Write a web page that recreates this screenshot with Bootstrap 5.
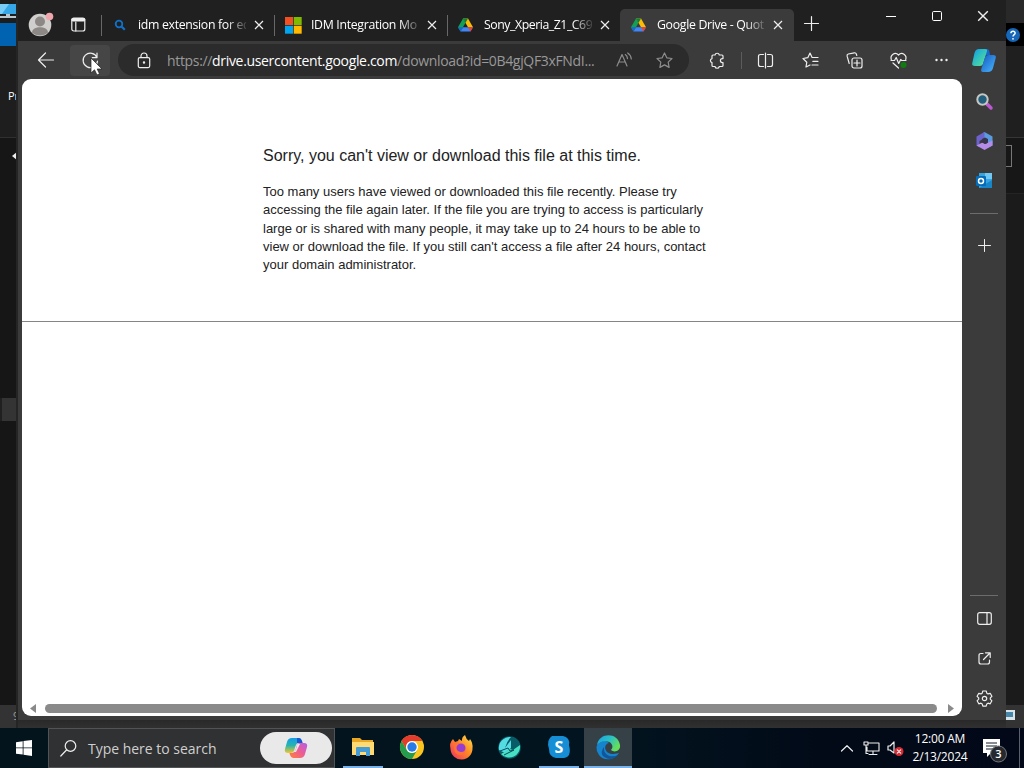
<!DOCTYPE html>
<html lang="en">
<head>
    <meta charset="UTF-8">
    <meta name="viewport" content="width=device-width, initial-scale=1.0">
    <title>Google Drive - Quota exceeded</title>
    <link href="https://cdn.jsdelivr.net/npm/bootstrap@5.3.2/dist/css/bootstrap.min.css" rel="stylesheet">
    <script src="https://cdn.jsdelivr.net/npm/bootstrap@5.3.2/dist/js/bootstrap.bundle.min.js"></script>
    <style>
        body { width: 1024px; height: 768px; background: #181818; font-family: "Open Sans", "Noto Sans", sans-serif; font-size: 12px; line-height: 1.5; color: #fff; }
        svg { display: block; flex: none; overflow: visible; }
        .line-icon { fill: none; stroke: #eee; stroke-width: 1.2; stroke-linecap: round; stroke-linejoin: round; }

        /* window behind the browser */
        .back-left { width: 18px; background: #161616; border-right: 2px solid #252525; }
        .back-left .title-area { height: 23px; background: #1d1d1d; }
        .back-left .file-tab { height: 23px; background: #0063b1; }
        .back-left .ribbon { height: 92px; background: #1e1e1e; border-bottom: 1px solid #303030; padding: 42px 0 0 8px; font-size: 11px; }
        .back-left .nav-area { height: 260px; padding: 11px 0 0 12px; }
        .back-left .picked { height: 23px; background: #343434; border-left: 2px solid #202020; }
        .back-left .back-status { padding: 3px 0 0 13px; font-size: 11px; color: #999; }
        .back-right { width: 18px; background: #1b1b1b; }
        .back-right .title-area { height: 23px; background: #292929; }
        .back-right .help-area { height: 23px; background: #000; }
        .back-right .ribbon { height: 92px; background: #1f1f1f; border-bottom: 1px solid #363636; }
        .back-right .address-area { height: 56px; background: #171717; border-bottom: 1px solid #242424; padding-top: 7px; }
        .back-right .address-end { width: 6px; height: 22px; border: 1px solid #777; border-left: 0; }
        .back-status { height: 23px; background: #333; }

        /* browser window */
        .desk { height: 728px; }
        .browser { width: 988px; height: 720px; background: #3b3b3b; }
        .browser-shadow { background: linear-gradient(#292929, #303030); }
        .tab-strip { height: 41px; background: #202020; }
        .profile { width: 44px; padding: 11px 0 0 10px; }
        .workspaces { width: 39px; padding: 17px 0 0 9px; }
        .page-tab { width: 173px; height: 32px; margin-top: 9px; padding-left: 10px; border-left: 1px solid transparent; }
        .page-tab.divided { border-image: linear-gradient(transparent 20%, #686868 20%, #686868 82%, transparent 82%) 1; }
        .page-tab.current { width: 174px; background: #3b3b3b; border-radius: 5px 5px 0 0; }
        .page-tab .favicon { width: 16px; margin-right: 10px; }
        .page-tab .caption { width: 108px; font-size: 12.3px; letter-spacing: -.32px; -webkit-mask-image: linear-gradient(90deg, #000 82%, rgba(0,0,0,.15) 100%); mask-image: linear-gradient(90deg, #000 82%, rgba(0,0,0,.15) 100%); }
        .page-tab .caption.tight { letter-spacing: -.45px; }
        .page-tab .shut { margin-left: 8px; }
        .caption-buttons { width: 138px; height: 32px; }
        .caption-buttons > div { width: 46px; }
        .new-tab { margin: 16px 0 0 10px; }
        .tool-bar { height: 38px; }
        .tool { width: 44px; height: 32px; }
        .tool.last { width: 42px; }
        .reload { width: 40px; height: 31px; background: #464646; border-radius: 4px; }
        .address { width: 571px; height: 32px; background: #2b2b2b; border-radius: 16px; padding-left: 18px; font-size: 14px; color: #999; }
        .address .url { width: 433px; margin-left: 15px; letter-spacing: -.33px; }
        .tool-line { width: 1px; height: 17px; margin-right: 2px; background: #5c5c5c; }
        .page { width: 940px; height: 637px; border-radius: 9px; color: #222; font-family: "Liberation Sans", Arial, sans-serif; }
        .message { width: 460px; height: 242px; margin-left: 241px; padding-top: 67px; }
        .message h1 { font-size: 16px; line-height: 19px; margin: 0 0 18px; font-weight: 400; }
        .message p { font-size: 13px; line-height: 18.3px; margin: 0; }
        .rule { height: 1px; background: #858585; }
        .scroller { height: 15px; padding: 0 8px; }
        .scroller .thumb { width: 892px; height: 9px; margin-right: 2px; border-radius: 5px; background: #8a8a8a; }
        .side { width: 44px; padding-bottom: 2px; }
        .side > div { height: 40px; }
        .side > .side-line { width: 28px; height: 1px; margin: 12px 0 11px; background: #6c6c6c; }
        .side > .side-line.lower { margin: auto 0 2px; }
        .pointer { left: 90px; top: 57px; }

        /* taskbar */
        .task-bar { height: 40px; background: linear-gradient(90deg, #04141c 0, #02141f 60%, #020a18 80%, #020817); }
        .start { width: 48px; }
        .search-field { width: 287px; height: 40px; background: #303133; border: 1px solid #515355; padding-left: 11px; color: #cfcfcf; font-size: 14px; }
        .search-field .hint { width: 172px; margin-left: 11px; letter-spacing: -.02px; }
        .copilot-pill { width: 72px; height: 32px; background: #e9e9ea; border-radius: 16px; }
        .app { width: 49px; height: 40px; border-bottom: 2px solid transparent; }
        .app.running { width: 40px; margin: 0 4px 0 5px; border-color: #79b2e8; }
        .app.focused { width: 48px; margin-left: 1px; background: #354047; border-color: #79b2e8; }
        .tray { width: 24px; }
        .clock { width: 66px; line-height: 18px; font-size: 12px; letter-spacing: -.22px; }
        .notices { width: 46px; padding: 2px 0 0 10px; }
        .peek { width: 5px; border-left: 1px solid #59616b; }
    </style>
</head>
<body class="overflow-hidden">
    <svg width="0" height="0" class="position-absolute">
        <defs>
            <symbol id="close" viewBox="0 0 10 10"><path d="M1 1l8 8M9 1L1 9" fill="none" stroke="#eee" stroke-width="1.2"/></symbol>
            <symbol id="drive" viewBox="0 0 16 14">
                <path d="M5.3 0h5.4L16 9.3H10.7z" fill="#fbbc04"/>
                <path d="M5.3 0L0 9.3 2.7 14 8 4.7z" fill="#13a055"/>
                <path d="M5.3 9.3H16L13.3 14H2.7z" fill="#4285f4"/>
                <path d="M10.7 9.3H16L13.3 14z" fill="#ea4335"/>
                <path d="M5.3 0h5.4L8 4.7z" fill="#0b8043"/>
                <path d="M0 9.3h5.3L2.7 14z" fill="#1967d2"/>
            </symbol>
            <linearGradient id="blueGreen" x1="0" y1="0" x2="1" y2="1"><stop stop-color="#148cf0"/><stop offset=".35" stop-color="#27b9c9"/><stop offset="1" stop-color="#63e491"/></linearGradient>
            <linearGradient id="skyBlue" x1="0" y1="0" x2="1" y2="1"><stop stop-color="#1558bd"/><stop offset="1" stop-color="#49b7ff"/></linearGradient>
            <linearGradient id="coolSide" x1="0" y1="0" x2="0" y2="1"><stop stop-color="#129ce9"/><stop offset=".5" stop-color="#28b4ad"/><stop offset="1" stop-color="#f5c72c"/></linearGradient>
            <linearGradient id="warmSide" x1="1" y1="0" x2="0" y2="1"><stop stop-color="#b45ee8"/><stop offset=".5" stop-color="#ee5d91"/><stop offset="1" stop-color="#ff8238"/></linearGradient>
            <linearGradient id="edgeTop" x1="0" y1="0" x2="1" y2=".5"><stop stop-color="#1ba0e0"/><stop offset=".55" stop-color="#2bc0c4"/><stop offset="1" stop-color="#66df58"/></linearGradient>
            <linearGradient id="flame" x1="1" y1="0" x2="0" y2="1"><stop stop-color="#ffe650"/><stop offset=".45" stop-color="#ff8a24"/><stop offset="1" stop-color="#f02b67"/></linearGradient>
        </defs>
    </svg>

    <div class="desk d-flex position-relative">
        <div class="back-left d-flex flex-column overflow-hidden">
            <div class="title-area flex-shrink-0">
                <svg width="17" height="19" viewBox="0 0 17 19"><path d="M0 4h16v10H0z" fill="#35a7e7"/><path d="M0 4h9L2 14H0z" fill="#77cdf5"/><path d="M6 14h4v2h6v2H0v-2h6z" fill="#b8c7ce"/></svg>
            </div>
            <div class="file-tab flex-shrink-0"></div>
            <div class="ribbon flex-shrink-0">Pr</div>
            <div class="nav-area flex-shrink-0"><svg width="6" height="14" viewBox="0 0 6 14"><path d="M6 2v10L0 7z" fill="#eee"/></svg></div>
            <div class="picked flex-shrink-0"></div>
            <div class="back-status mt-auto">9</div>
        </div>

        <div class="d-flex flex-column">
            <div class="browser d-flex flex-column">
                <div class="tab-strip d-flex">
                    <div class="profile">
                        <svg width="25" height="26" viewBox="0 0 25 26"><circle cx="12" cy="14" r="11.3" fill="#d1cfcd"/><circle cx="12" cy="10.5" r="5" fill="#8c8885"/><path d="M4 21.5c0-7 16-7 16 0-4 4-12 4-16 0z" fill="#8c8885"/><circle cx="21.5" cy="5.5" r="3.8" fill="#efa7ad"/></svg>
                    </div>
                    <div class="workspaces">
                        <svg width="15" height="15" viewBox="0 0 15 15" class="line-icon"><rect x=".8" y="1" width="13" height="13" rx="2"/><path d="M4.8 5v9"/><path d="M2 2.8h10.600" stroke-width="3.400"/></svg>
                    </div>
                    <div class="page-tab divided d-flex align-items-center">
                        <div class="favicon"><svg width="12" height="12" viewBox="0 0 12 12" class="mx-auto"><circle cx="5" cy="5" r="3.3" fill="none" stroke="#1071c9" stroke-width="1.8"/><path d="M7.5 7.5l3.3 3.3" stroke="#1071c9" stroke-width="2.2"/></svg></div>
                        <div class="caption text-nowrap">idm extension for ed</div>
                        <svg class="shut" width="10" height="10"><use href="#close"/></svg>
                    </div>
                    <div class="page-tab divided d-flex align-items-center">
                        <div class="favicon"><svg width="17" height="17" viewBox="0 0 17 17"><path d="M0 0h8v8H0z" fill="#f25022"/><path d="M8.7 0h8v8h-8z" fill="#7fba00"/><path d="M0 8.7h8v8H0z" fill="#00a4ef"/><path d="M8.7 8.7h8v8h-8z" fill="#ffb900"/></svg></div>
                        <div class="caption text-nowrap">IDM Integration Mo</div>
                        <svg class="shut" width="10" height="10"><use href="#close"/></svg>
                    </div>
                    <div class="page-tab divided d-flex align-items-center">
                        <div class="favicon"><svg width="15" height="14"><use href="#drive"/></svg></div>
                        <div class="caption tight text-nowrap">Sony_Xperia_Z1_C69</div>
                        <svg class="shut" width="10" height="10"><use href="#close"/></svg>
                    </div>
                    <div class="page-tab current d-flex align-items-center">
                        <div class="favicon"><svg width="15" height="14"><use href="#drive"/></svg></div>
                        <div class="caption text-nowrap">Google Drive - Quot</div>
                        <svg class="shut" width="10" height="10"><use href="#close"/></svg>
                    </div>
                    <svg class="line-icon new-tab" width="15" height="15" viewBox="0 0 15 15"><path d="M7.500 .5v14M.5 7.500h14"/></svg>
                    <div class="caption-buttons d-flex align-items-center ms-auto">
                        <div><svg class="mx-auto" width="10" height="10" viewBox="0 0 10 10"><path d="M0 5.5h10" stroke="#fff"/></svg></div>
                        <div><svg class="mx-auto" width="10" height="10" viewBox="0 0 10 10"><rect x=".5" y=".5" width="9" height="9" rx="1.2" fill="none" stroke="#fff"/></svg></div>
                        <div><svg class="mx-auto" width="12" height="12"><use href="#close"/></svg></div>
                    </div>
                </div>

                <div class="d-flex flex-grow-1">
                    <div>
                        <div class="tool-bar d-flex align-items-center">
                            <div class="d-flex align-items-center justify-content-center ms-1 me-1 tool">
                                <svg class="line-icon me-n1 ms-1" width="17" height="16" viewBox="0 0 17 16"><path d="M15.5 8H.5M7.500 1L.5 8l7 7"/></svg>
                            </div>
                            <div class="reload d-flex align-items-center justify-content-center">
                                <svg class="line-icon" width="17" height="17" viewBox="0 0 17 17"><path d="M15 5.700A7.2 7.2 0 1 0 15.500 9M15 1v4.700h-4.700"/></svg>
                            </div>
                            <div class="address d-flex align-items-center ms-2">
                                <svg class="line-icon" width="16" height="17" viewBox="0 0 16 17"><rect x="2.3" y="5.6" width="11.4" height="10" rx="1.5"/><path d="M5 5.5V4a3 3 0 0 1 6 0v1.5"/><circle cx="8" cy="10.5" r=".6" fill="#eee"/></svg>
                                <div class="url text-nowrap">https://<span class="text-white">drive.usercontent.google.com</span>/download?id=0B4gjQF3xFNdI...</div>
                                <svg class="line-icon ms-3 opacity-50" width="17" height="16" viewBox="0 0 17 16"><path d="M1 14L6 2.5 11 14M2.8 10h6.5M9.3 2.6q2 1.3 2.2 4M11.7 1q3.3 2.1 3.6 6"/></svg>
                                <svg class="line-icon ms-4 opacity-50" width="17" height="17" viewBox="0 0 17 17"><path d="M7.500 1l2.3 4.8 5.2.7-3.8 3.6.9 5.3-4.6-2.5-4.6 2.5.9-5.3L0 6.5l5.2-.7z"/></svg>
                            </div>
                            <div class="d-flex align-items-center justify-content-center ms-2 tool">
                                <svg class="line-icon me-1" width="16" height="17" viewBox="0 0 16 17"><path d="M6 3a2.200 2.200 0 0 1 4.300 0h2.700q1 0 1 1v2.600h-.6a2 2 0 0 0 0 4h.6v2.900q0 1-1 1h-2.700a2.200 2.200 0 0 1-4.300 0H4q-1 0-1-1v-2.900a2.050 2.050 0 0 1 0-4V4q0-1 1-1z"/></svg>
                            </div>
                            <div class="tool-line"></div>
                            <div class="d-flex align-items-center justify-content-center tool">
                                <svg class="line-icon" width="16" height="15" viewBox="0 0 16 15"><path d="M5.500 1.5H2.5Q.5 1.500 .5 3.500v8q0 2 2 2h3M9.500 1.5h3q2 0 2 2v8q0 2-2 2h-3M7.500 0v15"/></svg>
                            </div>
                            <div class="d-flex align-items-center justify-content-center tool">
                                <svg class="line-icon" width="17" height="16" viewBox="0 0 17 16"><path d="M8 13l-4 2 .8-4.8L1 6.5l4.8-.8L8 1l2.1 4.5H16M10.8 9.3H16M10 13h6"/></svg>
                            </div>
                            <div class="d-flex align-items-center justify-content-center tool">
                                <svg class="line-icon" width="17" height="17" viewBox="0 0 17 17"><rect x="6" y="6" width="10" height="10" rx="2"/><path d="M11 8v6M8 11h6M3.2 11.5L1.1 4.2Q.7 2.5 2.3 2l6-1.2q1.5-.3 2 1.2l.5 1.5"/></svg>
                            </div>
                            <div class="d-flex align-items-center justify-content-center tool">
                                <svg class="line-icon" width="17" height="17" viewBox="0 0 17 17"><circle cx="13.5" cy="13" r="3" fill="#107c10" stroke="none"/><path d="M1.3 7.5C-.2 3 5-.8 8.5 3 12-.8 17.2 3 15.7 7.5M1 8.5h3.5l1.7-3 2.5 6 2-4 1 1H16M3 11l5.5 5"/></svg>
                            </div>
                            <div class="d-flex align-items-center justify-content-center tool last">
                                <svg width="15" height="4" viewBox="0 0 15 4" fill="#eee"><circle cx="2.500" cy="2" r="1.2"/><circle cx="7.5" cy="2" r="1.2"/><circle cx="12.500" cy="2" r="1.2"/></svg>
                            </div>
                        </div>

                        <div class="page bg-white ms-1 d-flex flex-column">
                            <div class="message">
                                <h1>Sorry, you can't view or download this file at this time.</h1>
                                <p>Too many users have viewed or downloaded this file recently. Please try<br>accessing the file again later. If the file you are trying to access is particularly<br>large or is shared with many people, it may take up to 24 hours to be able to<br>view or download the file. If you still can't access a file after 24 hours, contact<br>your domain administrator.</p>
                            </div>
                            <div class="rule"></div>
                            <div class="scroller d-flex align-items-center justify-content-between mt-auto">
                                <svg width="6" height="9" viewBox="0 0 6 9"><path d="M6 0v9L0 4.5z" fill="#8a8a8a"/></svg>
                                <div class="thumb"></div>
                                <svg width="6" height="9" viewBox="0 0 6 9"><path d="M0 0v9l6-4.5z" fill="#8a8a8a"/></svg>
                            </div>
                        </div>
                    </div>

                    <div class="side d-flex flex-column align-items-center">
                        <div class="d-flex align-items-center">
                            <svg width="24" height="24" viewBox="0 0 24 24"><path d="M12 0h3q2 0 2.500 3l.5 3h-7z" fill="#1566d2"/><path d="M7 0h6q2.500 0 2 2l-4 13q-.7 2-3 2H3q-3.500 0-2.700-3L2.500 4q1-4 4.500-4z" fill="url(#blueGreen)"/><path d="M16.500 6H21q3.500 0 2.700 3l-2.700 10q-1 4-5 4h-5q-2.500 0-1.700-3l3.500-11q1-3 3.700-3z" fill="url(#skyBlue)"/></svg>
                        </div>
                        <div class="d-flex align-items-center">
                            <svg width="17" height="17" viewBox="0 0 17 17"><path d="M11 11l4 4" stroke="#bd59d0" stroke-width="3.5" stroke-linecap="round"/><circle cx="6.5" cy="6.5" r="5.2" fill="#235f7d" stroke="#c6c6c3" stroke-width="2"/></svg>
                        </div>
                        <div class="d-flex align-items-center">
                            <svg width="17" height="18" viewBox="0 0 17 18"><path d="M8.500 0l8 4.500v9l-5 2.500V8.500L5 5l2-4z" fill="#5a9be0"/><path d="M8.500 0L.5 4.500v9l3 1.700V9l5-3z" fill="#6d62cb"/><path d="M.5 13.500l6-3 3 1.500 7-3.500v5l-8 4.500z" fill="#b58bea"/><path d="M6 7l3-1.5L12 7v3.5L9 12l-3-1.5z" fill="#37354d"/></svg>
                        </div>
                        <div class="d-flex align-items-center">
                            <svg width="16" height="16" viewBox="0 0 16 16"><path d="M3 0h13v15H3z" fill="#35a4df"/><path d="M9 0h7v6H9z" fill="#70c9f4"/><path d="M3 15l13-8v8z" fill="#1686c9"/><rect y="3" width="10" height="10" rx="1" fill="#066bb8"/><circle cx="5" cy="8" r="2.5" fill="none" stroke="#fff" stroke-width="1.5"/></svg>
                        </div>
                        <div class="side-line"></div>
                        <div class="d-flex align-items-center">
                            <svg class="line-icon" width="13" height="13" viewBox="0 0 13 13"><path d="M6.5 .5v12M.5 6.5h12" stroke-width="1"/></svg>
                        </div>
                        <div class="side-line lower"></div>
                        <div class="d-flex align-items-center">
                            <svg class="line-icon" width="15" height="13" viewBox="0 0 15 13"><rect x=".7" y=".7" width="13.6" height="11.6" rx="2"/><path d="M10 1v11"/></svg>
                        </div>
                        <div class="d-flex align-items-center">
                            <svg class="line-icon" width="13" height="13" viewBox="0 0 13 13"><path d="M5 1.5H3q-2 0-2 2V10q0 2 2 2h6.5q2 0 2-2V8M7.5.8h4.7v4.7M12 1L5.5 7.5"/></svg>
                        </div>
                        <div class="d-flex align-items-center">
                            <svg class="line-icon" width="17" height="17" viewBox="0 0 17 17"><path d="M6.8 1h3.4l.6 2.2 1.2.7 2.2-.6 1.7 3-1.6 1.6v1.3l1.6 1.6-1.7 3-2.2-.6-1.2.7-.6 2.2H6.8l-.6-2.2-1.2-.7-2.2.6-1.7-3 1.6-1.6V7.9L1.1 6.3l1.7-3 2.2.6 1.2-.7z"/><circle cx="8.5" cy="8.5" r="2.2"/></svg>
                        </div>
                    </div>
                </div>
            </div>
            <div class="browser-shadow flex-grow-1"></div>
        </div>

        <div class="back-right d-flex flex-column">
            <div class="title-area"></div>
            <div class="help-area d-flex align-items-center"><svg width="14" height="14" viewBox="0 0 14 14"><circle cx="7" cy="7" r="7" fill="#1667b7"/><path d="M4.9 5.3c.1-3 4.4-2.7 4.2-.1C9 6.7 7 6.5 7 8.6" fill="none" stroke="#fff" stroke-width="1.5"/><circle cx="7" cy="10.8" r=".9" fill="#fff"/></svg></div>
            <div class="ribbon"></div>
            <div class="address-area"><div class="address-end"></div></div>
            <div class="back-status mt-auto pt-1"><svg width="10" height="12" viewBox="0 0 10 12"><path d="M0 1h9v10H0z" fill="#d9e5e9"/><path d="M0 3h7v5H0z" fill="#4687aa"/></svg></div>
        </div>

        <svg class="pointer position-absolute" width="13" height="19" viewBox="0 0 13 19"><path d="M1 1v15l3.5-3.2L7 18l2.5-1.2L7.2 12H12z" fill="#fff" stroke="#222" stroke-width=".7"/></svg>
    </div>

    <div class="task-bar d-flex align-items-center">
        <div class="start"><svg class="mx-auto" width="16" height="16" viewBox="0 0 16 16" fill="#fff"><path d="M0 2.2L6.7 1.2v6.3H0zM7.5 1.1L16 0v7.5H7.5zM0 8.3h6.7v6.3L0 13.7zM7.5 8.3H16V16l-8.5-1.2z"/></svg></div>
        <div class="search-field d-flex align-items-center">
            <svg class="line-icon" width="17" height="17" viewBox="0 0 17 17"><circle cx="10.5" cy="6" r="5.3"/><path d="M6.5 10L.8 16"/></svg>
            <div class="hint text-nowrap">Type here to search</div>
            <div class="copilot-pill d-flex align-items-center justify-content-center">
                <svg width="22" height="20" viewBox="0 0 22 20"><path d="M7 0h7q2 0 3 3l.5 2h-4q-2 0-3 3L9 13q-1 2-3 2H3q-4 0-3-4L2 4q1-4 5-4z" fill="url(#coolSide)"/><path d="M15 20H8q-2 0-3-3l-.5-2h3q2 0 3-3L12 7q1-2 3-2h4q4 0 3 4l-2 7q-1 4-5 4z" fill="url(#warmSide)"/><path d="M12 0h2q2 0 3 3l.5 2H12z" fill="#1958d2"/><path d="M12.500 6h2.500l-4 8H8.500q1.700-.5 2.500-3z" fill="#e9e9ea"/></svg>
            </div>
        </div>

        <div class="app running d-flex align-items-center justify-content-center ms-2">
            <svg width="22" height="20" viewBox="0 0 22 20"><path d="M0 1h8l2 2h11v15H0z" fill="#e9a823"/><path d="M0 5h22v13H0z" fill="#ffda73"/><path d="M4 19V11q0-1 1-1h12q1 0 1 1v8h-4v-4H8v4z" fill="#459bd3"/></svg>
        </div>
        <div class="app d-flex align-items-center justify-content-center">
            <svg width="24" height="24" viewBox="0 0 24 24"><circle cx="12" cy="12" r="12" fill="#fbc51f"/><path d="M1.6 6A12 12 0 0 1 22.4 6H12a6 6 0 0 0-5.2 9z" fill="#e33b2e"/><path d="M1.6 6A12 12 0 0 0 12 24l5.2-9A6 6 0 0 1 6.8 15z" fill="#249c4d"/><circle cx="12" cy="12" r="6" fill="#fff"/><circle cx="12" cy="12" r="4.7" fill="#287ae6"/></svg>
        </div>
        <div class="app d-flex align-items-center justify-content-center">
            <svg width="24" height="24" viewBox="0 0 24 24"><path d="M4 4l2 3 3-1 1-2 3 2q-.5-4 3-6 1 4 4 6l1-2q3 4 2.500 9a11 11 0 0 1-22 1Q0 8 4 4z" fill="url(#flame)"/><circle cx="12" cy="13" r="4.5" fill="#963bd4"/><path d="M6 7q2 1 5 1-2 2-4 2-1 6 5 7 4 0 5-3-1 6-6 6-6-1-6-7 0-4 1-6z" fill="#ff7134"/></svg>
        </div>
        <div class="app d-flex align-items-center justify-content-center">
            <svg width="23" height="23" viewBox="0 0 23 23"><circle cx="11.5" cy="11.5" r="11.3" fill="#075c68"/><path d="M1 14A11 11 0 0 1 13 1Q9 5 7 12l6-8v8l-6 5z" fill="#55dce3"/><path d="M3 18l9-5 3 1 7-5a11 11 0 0 1-19 9z" fill="#47e0c2"/><path d="M2 15l8-3 2 3 4-1-10 5" fill="none" stroke="#074e5c"/></svg>
        </div>
        <div class="app running d-flex align-items-center justify-content-center">
            <svg width="22" height="22" viewBox="0 0 22 22"><path d="M4 0h11a7 7 0 0 1 6 9q3 12-5 13H8Q1 21 1 13-2 4 4 0z" fill="#168ed5"/><text x="11" y="16.5" text-anchor="middle" font-size="16" font-weight="700" fill="#fff">S</text></svg>
        </div>
        <div class="app focused d-flex align-items-center justify-content-center">
            <svg width="25" height="24" viewBox="0 0 25 24"><path d="M1 10C3-3 22-3 24 10c1 6-6 8-9 5 4-4-1-10-6-8-3 0-6 1-8 3z" fill="url(#edgeTop)"/><path d="M.5 12C1 7 9 4 13 8c-6 1-5 11 4 11 3 0 5-1 6-1-5 8-16 8-20 2Q0 16 .5 12z" fill="#1683cd"/><path d="M8 12c-1 9 8 11 14 8-5 6-12 4-15 1q-3-4 1-9z" fill="#115699"/></svg>
        </div>

        <div class="tray ms-auto"><svg class="line-icon mx-auto" width="12" height="7" viewBox="0 0 12 7"><path d="M.5 6L6 .7 11.5 6"/></svg></div>
        <div class="tray"><svg class="line-icon mx-auto" width="17" height="15" viewBox="0 0 17 15"><path d="M6 2h10v8H4V6M10 10v3M6 13.5h8M1 1h4v3H1zM3 4v8.5h2" stroke-width="1.1"/></svg></div>
        <div class="tray"><svg class="line-icon mx-auto" width="17" height="15" viewBox="0 0 17 15"><path d="M1 5h2l4-4v11L3 9H1z"/><g stroke="none"><circle cx="12" cy="10.5" r="4.5" fill="#d92932"/></g><path d="M10.3 8.8l3.4 3.4M13.7 8.8l-3.4 3.4"/></svg></div>
        <div class="clock text-center text-nowrap">12:00 AM<br>2/13/2024</div>
        <div class="notices">
            <svg width="24" height="26" viewBox="0 0 24 26"><path d="M0 3h17v14H8l-4 4v-4H0z" fill="#fff"/><path d="M3 7h11M3 10h11M3 13h8" stroke="#111827"/><circle cx="15.500" cy="18" r="8" fill="#26292e" stroke="#74777b"/><text x="15.500" y="22" text-anchor="middle" font-size="11" font-weight="600" fill="#fff">3</text></svg>
        </div>
        <div class="peek h-100"></div>
    </div>
</body>
</html>
